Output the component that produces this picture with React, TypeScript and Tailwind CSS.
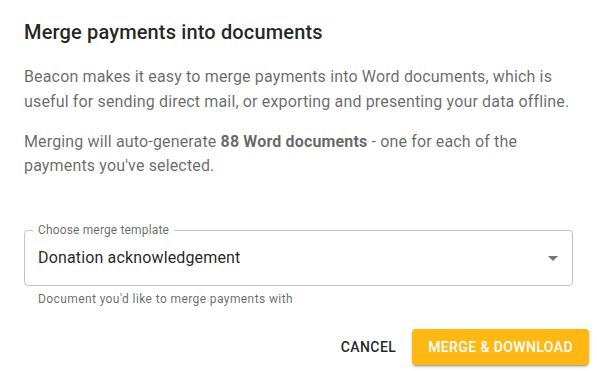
export default function App() {
  return (
    <div className="w-[597px] h-[371px] bg-white font-['Roboto',sans-serif] flex flex-col">
      <h2 className="px-6 pt-4 text-[20px] leading-[32px] font-medium text-[rgba(0,0,0,0.87)] tracking-[0.15px]">
        Merge payments into documents
      </h2>
      <div className="px-6 pt-4 flex flex-col">
        <p className="text-[16px] leading-[25px] text-[rgba(0,0,0,0.6)] tracking-[0.15px]">
          Beacon makes it easy to merge payments into Word documents, which is useful for sending direct mail, or exporting and presenting your data offline.
        </p>
        <p className="mt-[16px] text-[16px] leading-[24px] text-[rgba(0,0,0,0.6)] tracking-[0.15px]">
          Merging will auto-generate <strong className="font-bold">88 Word documents</strong> - one for each of the payments you've selected.
        </p>

        <div className="mt-[52px] flex flex-col">
          <div className="relative h-[56px] rounded-[4px] border border-[rgba(0,0,0,0.23)] flex items-center pl-[13px] pr-[7px]">
            <span className="absolute -top-[8px] left-[8px] px-[5px] bg-white text-[12px] leading-[14px] text-[rgba(0,0,0,0.6)] tracking-[0.15px]">
              Choose merge template
            </span>
            <span className="flex-1 text-[16px] text-[rgba(0,0,0,0.87)] tracking-[0.15px]">
              Donation acknowledgement
            </span>
            <svg width="24" height="24" viewBox="0 0 24 24" className="fill-[rgba(0,0,0,0.54)]">
              <path d="M7 10l5 5 5-5z" />
            </svg>
          </div>
          <p className="mt-[3px] mx-[14px] text-[12px] leading-[20px] text-[rgba(0,0,0,0.6)] tracking-[0.4px]">
            Document you'd like to merge payments with
          </p>
        </div>
      </div>

      <div className="mt-auto mb-[6px] px-2 flex justify-end items-center gap-2">
        <button className="h-[36px] px-2 rounded-[4px] text-[14px] font-medium uppercase tracking-[0.4px] text-[rgba(0,0,0,0.87)]">
          Cancel
        </button>
        <button className="h-[36px] px-4 rounded-[4px] bg-[#fdb813] text-white text-[14px] font-medium uppercase tracking-[0.4px] shadow-[0px_3px_1px_-2px_rgba(0,0,0,0.2),0px_2px_2px_0px_rgba(0,0,0,0.14),0px_1px_5px_0px_rgba(0,0,0,0.12)]">
          Merge &amp; Download
        </button>
      </div>
    </div>
  );
}
